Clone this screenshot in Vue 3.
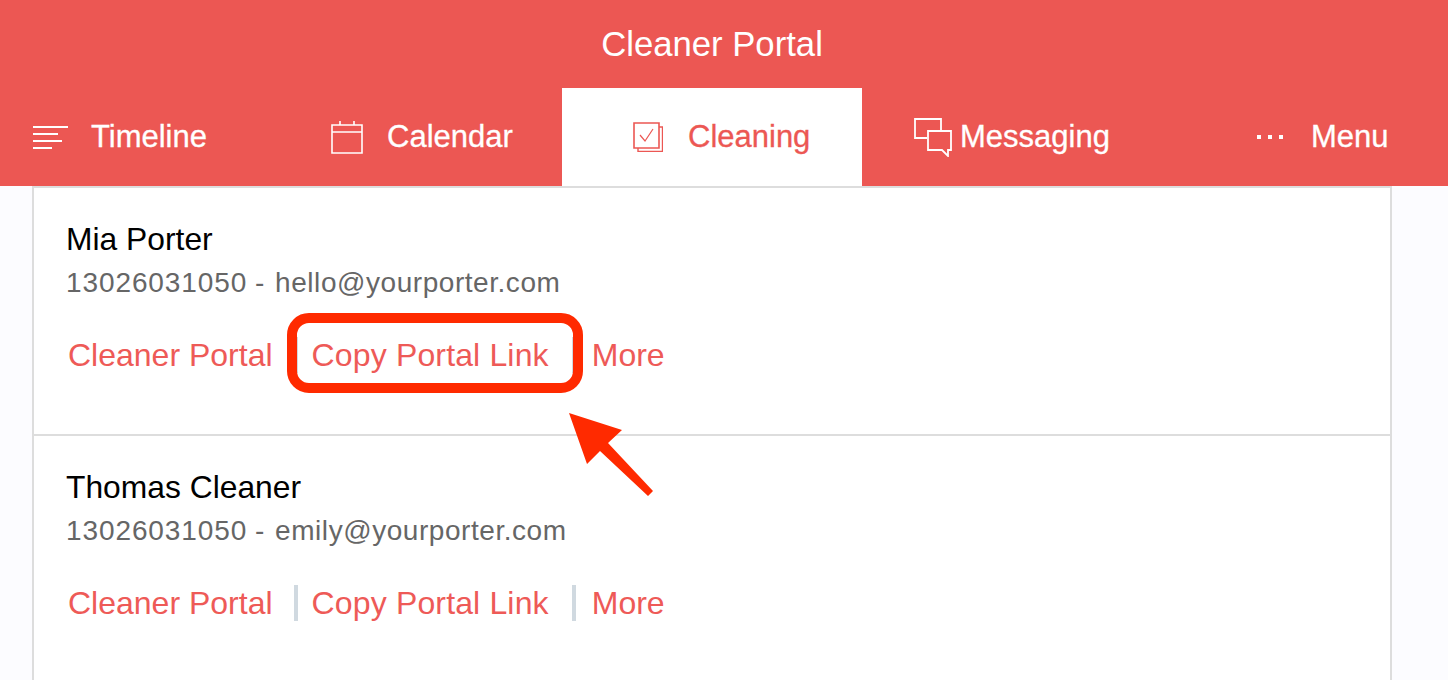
<script setup>
const tabs = [
  { name: 'Timeline', icon: 'timeline', cls: 'tab-timeline' },
  { name: 'Calendar', icon: 'calendar', cls: 'tab-calendar' },
  { name: 'Cleaning', icon: 'cleaning', cls: 'tab-cleaning', active: true },
  { name: 'Messaging', icon: 'messaging', cls: 'tab-messaging' },
  { name: 'Menu', icon: 'menu', cls: 'tab-menu' }
]

const cleaners = [
  { name: 'Mia Porter', phone: '13026031050', email: 'hello@yourporter.com' },
  { name: 'Thomas Cleaner', phone: '13026031050', email: 'emily@yourporter.com' }
]
</script>

<template>
  <div class="page">
    <header class="top">
      <h1 class="title">Cleaner Portal</h1>
      <nav class="tabs">
        <a v-for="tab in tabs" :key="tab.name" class="tab" :class="[tab.cls, { active: tab.active }]">
          <svg v-if="tab.icon === 'timeline'" class="icon" width="36" height="24" viewBox="0 0 36 24" fill="none" stroke="currentColor" stroke-width="2">
            <path d="M0 2H35M0 9H25M0 16H29M0 23H19" />
          </svg>
          <svg v-else-if="tab.icon === 'calendar'" class="icon" width="32" height="33" viewBox="0 0 32 33" fill="none" stroke="currentColor" stroke-width="1.6">
            <path d="M1 4H31V32H1ZM1 11H31M9 0V4M23 0V4" />
          </svg>
          <svg v-else-if="tab.icon === 'cleaning'" class="icon" width="30" height="30" viewBox="0 0 30 30" fill="none" stroke="currentColor" stroke-width="1.6">
            <path d="M1 1H26V26H1Z" />
            <path d="M26 5H29.5V29.5H5V26" stroke-width="1.4" />
            <path d="M7 13L12 19L20 7" stroke-width="1.2" />
          </svg>
          <svg v-else-if="tab.icon === 'messaging'" class="icon" width="39" height="39" viewBox="0 0 39 39" fill="none" stroke="currentColor" stroke-width="1.8">
            <path d="M13 20H1V1H27V13" />
            <path d="M14 13H37V32H34V38L28 32H14Z" />
          </svg>
          <svg v-else class="icon" width="26" height="4" viewBox="0 0 26 4" fill="currentColor">
            <rect x="0" width="4" height="4" />
            <rect x="11" width="4" height="4" />
            <rect x="22" width="4" height="4" />
          </svg>
          <span class="tab-name">{{ tab.name }}</span>
        </a>
      </nav>
    </header>

    <section class="list">
      <article v-for="c in cleaners" :key="c.name" class="row">
        <div class="name">{{ c.name }}</div>
        <div class="contact"><span class="phone">{{ c.phone }}</span> - <span class="email">{{ c.email }}</span></div>
        <div class="links">
          <a class="link link-portal">Cleaner Portal</a>
          <a class="link link-copy">Copy Portal Link</a>
          <a class="link link-more">More</a>
        </div>
      </article>
    </section>

    <!-- annotation drawn over the screenshot -->
    <svg class="markup" width="1448" height="680" viewBox="0 0 1448 680">
      <rect x="292" y="318" width="286" height="70" rx="17" fill="none" stroke="#ff2a00" stroke-width="10" />
      <path d="M569 413L622 430L608 443L653 491L648 496L600 451L587 464Z" fill="#ff2a00" />
    </svg>
  </div>
</template>

<style scoped>
.page {
  position: relative;
  height: 680px;
  overflow: hidden;
  background: #fcfcff;
  font-family: "Liberation Sans", Arial, sans-serif;
}

.top {
  height: 186px;
  background: #ec5753;
  color: #fff;
}
.title {
  margin: 0;
  height: 88px;
  line-height: 88px;
  padding-right: 24px;
  text-align: center;
  font-size: 34.7px;
  font-weight: 400;
}

.tabs {
  display: flex;
  height: 98px;
}
.tab {
  display: flex;
  align-items: center;
  height: 100%;
  box-sizing: border-box;
  font-size: 31px;
  color: #fff;
  -webkit-text-stroke: 0.3px currentColor;
}
.tab.active {
  background: #fff;
  color: #ec5753;
}
.tab-name {
  white-space: nowrap;
  margin-top: -1px;
}

.tab-timeline { width: 281px; padding-left: 33px; }
.tab-timeline .icon { margin-right: 22px; }
.tab-calendar { width: 281px; padding-left: 50px; }
.tab-calendar .icon { margin-right: 24px; }
.tab-cleaning { width: 300px; padding-left: 71px; }
.tab-cleaning .icon { margin-right: 25px; }
.tab-messaging { width: 300px; padding-left: 52px; }
.tab-messaging .icon { margin-right: 7px; }
.tab-menu { flex: 1; padding-left: 95px; }
.tab-menu .icon { margin-right: 28px; }

.list {
  margin: 0 56px 0 32px;
  background: #fff;
  border: 2px solid #ddd;
  border-bottom: 0;
}
.row {
  height: 248px;
  box-sizing: border-box;
  padding: 33px 0 0 32px;
  border-bottom: 2px solid #ddd;
}
.row + .row { height: 300px; }

.name {
  font-size: 31.8px;
  line-height: 36px;
  color: #000;
}
.contact {
  margin-top: 8px;
  font-size: 28px;
  line-height: 36px;
  color: #666;
}
.phone { letter-spacing: 0.9px; }
.email {
  margin-left: 3px;
  letter-spacing: 0.55px;
}

.links {
  display: flex;
  align-items: center;
  margin-top: 36px;
  padding-left: 2px;
  font-size: 32px;
  line-height: 36px;
  color: #ee5a57;
}
.link { white-space: nowrap; }
.link-portal { padding-right: 21px; }
.link-copy {
  padding: 0 23px 0 14px;
  letter-spacing: 0.15px;
  border-left: 4px solid #d0d9e0;
}
.link-more {
  padding-left: 16px;
  border-left: 4px solid #d0d9e0;
}

.markup {
  position: absolute;
  top: 0;
  left: 0;
}
</style>
